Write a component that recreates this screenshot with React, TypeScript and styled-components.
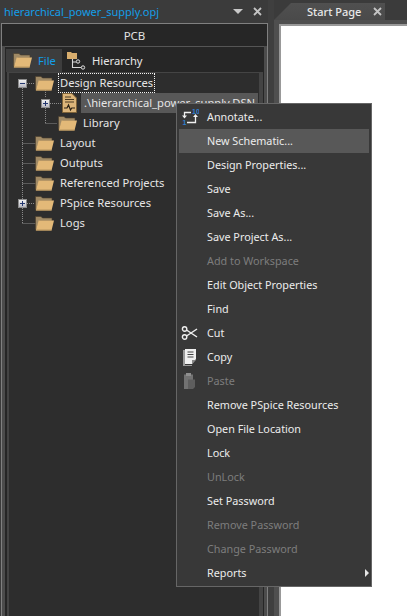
import React from "react";
import styled, { createGlobalStyle } from "styled-components";

const Global = createGlobalStyle`
  html, body { margin: 0; padding: 0; background: #3b3b3b; }
  #root { width: 407px; height: 616px; overflow: hidden; }
  * { box-sizing: border-box; }
`;

const Page = styled.div`
  position: relative;
  width: 407px;
  height: 616px;
  display: flex;
  background: #3b3b3b;
  font-family: "Noto Sans", "Open Sans", sans-serif;
  font-size: 11.2px;
  color: #e6e6e6;
  overflow: hidden;
`;

const LeftDock = styled.div`
  width: 268px;
  flex: none;
  display: flex;
  flex-direction: column;
`;

const DockTitle = styled.div`
  height: 23px;
  flex: none;
  display: flex;
  align-items: center;
  padding-left: 4px;
  color: #149ee8;
  font-size: 11px;
`;

const DockTitleText = styled.span`
  flex: 1;
`;

const DockArrow = styled.span`
  width: 0;
  height: 0;
  border-left: 5px solid transparent;
  border-right: 5px solid transparent;
  border-top: 5px solid #c8c8c8;
  margin-right: 10px;
`;

const CloseGlyph = styled.svg`
  width: 9px;
  height: 9px;
  flex: none;
  display: block;
`;

const DockCloseSlot = styled.span`
  display: flex;
  margin-right: 6px;
`;

const DockBody = styled.div`
  flex: 1;
  margin-left: 1px;
  border: 1px solid #808080;
  border-bottom: none;
  display: flex;
  flex-direction: column;
  background: #4c4c4c;
`;

const PanelHeader = styled.div`
  height: 22px;
  flex: none;
  background: #262626;
  display: flex;
  align-items: center;
  justify-content: center;
  font-size: 11.5px;
  color: #e2e2e2;
`;

const PanelInset = styled.div`
  flex: 1;
  display: flex;
  flex-direction: column;
  padding: 0 3px;
`;

const PanelFrame = styled.div`
  flex: 1;
  border-top: 1px solid #555;
  padding: 0 1px;
  display: flex;
  flex-direction: column;
  background: #262626;
`;

const TabStrip = styled.div`
  height: 23px;
  flex: none;
  margin-top: 2px;
  display: flex;
`;

const SideTab = styled.div<{ $active?: boolean }>`
  width: ${(p) => (p.$active ? "56px" : "86px")};
  display: flex;
  align-items: center;
  gap: ${(p) => (p.$active ? "6px" : "5px")};
  padding-left: ${(p) => (p.$active ? "7px" : "5px")};
  background: ${(p) => (p.$active ? "#3d3d3d" : "transparent")};
  color: ${(p) => (p.$active ? "#139ee8" : "#e6e6e6")};
`;

const TreePane = styled.div`
  position: relative;
  flex: 1;
  margin-left: 1px;
  background: #2d2d2d;
  border-top: 1px solid #444;
  border-left: 2px solid #444;
  border-right: 4px solid #444;
`;

const TreeLines = styled.svg`
  position: absolute;
  left: 0;
  top: 0;
  width: 80px;
  height: 160px;
  pointer-events: none;
`;

const Row = styled.div<{ $indent: number }>`
  position: relative;
  height: 20px;
  display: flex;
  align-items: center;
  padding-left: ${(p) => p.$indent}px;
  white-space: nowrap;
`;

const Expander = styled.span<{ $left: number }>`
  position: absolute;
  top: 6px;
  left: ${(p) => p.$left}px;
  width: 9px;
  height: 9px;
  background: linear-gradient(#f2f2f2, #b9b9c2);
  border: 1px solid #8c8c8c;
  display: block;
`;

const ExpanderGlyph = styled.svg`
  display: block;
  width: 7px;
  height: 7px;
`;

const RowLabel = styled.span<{ $selected?: boolean; $focus?: boolean }>`
  margin-left: 4px;
  height: 20px;
  line-height: 19px;
  padding: 0 ${(p) => (p.$selected ? "0 0 3px" : "2px")};
  color: #e6e6e6;
  background: ${(p) => (p.$selected ? "#585858" : "transparent")};
  outline: ${(p) => (p.$focus ? "1px dotted #f2f2f2" : "none")};
  outline-offset: -1px;
  ${(p) => (p.$selected ? "width: 177px; overflow: hidden;" : "")}
`;

const Splitter = styled.div`
  width: 6px;
  flex: none;
  background: #3f3f3f;
`;

const RightDock = styled.div`
  flex: 1;
  display: flex;
  flex-direction: column;
`;

const TabBar = styled.div`
  height: 20px;
  flex: none;
  display: flex;
  align-items: flex-end;
`;

const DocTab = styled.div`
  width: 111px;
  height: 17px;
  display: flex;
  align-items: center;
  padding-left: 33px;
  gap: 12px;
  background: linear-gradient(#505050, #4a4a4a);
  clip-path: polygon(0 100%, 17px 0, 100% 0, 100% 100%);
  color: #e8e8e8;
  font-size: 11px;
  font-weight: 500;
`;

const DocumentWell = styled.div`
  flex: 1;
  display: flex;
  padding: 4px 0 0 5px;
  background: #4f4f4f;
`;

const DocumentSheet = styled.div`
  flex: 1;
  background: #fff;
  border-top: 2px solid #999;
  border-left: 2px solid #999;
`;

const Menu = styled.div`
  position: absolute;
  left: 176px;
  top: 103px;
  width: 196px;
  height: 484px;
  background: #383838;
  border: 1px solid #666;
  padding: 1px 2px 0 2px;
  display: flex;
  flex-direction: column;
  font-size: 10.8px;
`;

const MenuItem = styled.div<{ $disabled?: boolean; $hot?: boolean }>`
  position: relative;
  height: 24px;
  flex: none;
  display: flex;
  align-items: center;
  padding: 0 0 2px 28px;
  color: ${(p) => (p.$disabled ? "#7d7d7d" : "#ececec")};
  background: ${(p) => (p.$hot ? "#585858" : "transparent")};
`;

const MenuIcon = styled.svg`
  position: absolute;
  left: 2px;
  top: 3px;
  width: 18px;
  height: 18px;
`;

const Submenu = styled.span`
  position: absolute;
  right: 0;
  top: 8px;
  width: 0;
  height: 0;
  border-top: 4px solid transparent;
  border-bottom: 4px solid transparent;
  border-left: 4px solid #e6e6e6;
`;

const Folder = () => (
  <svg width="19" height="15" viewBox="0 0 19 15" style={{ flex: "none", display: "block" }}>
    <path d="M.5 .5h5.5l1.5 1.5H17V5H4.5L1.5 13.5H.5z" fill="#a08a66" stroke="#4a3e2c" strokeWidth=".6" />
    <path d="M3.6 4.5H19L16.5 14.6H.8z" fill="#e3b978" />
    <path d="M.9 14.6H16.5l.25-1H1.2z" fill="#b8955f" />
  </svg>
);

const Close = ({ color }: { color: string }) => (
  <CloseGlyph viewBox="0 0 9 9">
    <path d="M1 1l7 7M8 1L1 8" stroke={color} strokeWidth="1.8" />
  </CloseGlyph>
);

const Expand = ({ open }: { open: boolean }) => (
  <ExpanderGlyph viewBox="0 0 7 7">
    <path d={open ? "M1 3.5h5" : "M1 3.5h5M3.5 1v5"} stroke="#23376f" strokeWidth="1" />
  </ExpanderGlyph>
);

const HierarchyIcon = () => (
  <svg width="20" height="20" viewBox="0 0 20 20" style={{ flex: "none" }}>
    <path d="M0 1h4l1 1h5v6H0z" fill="#d8ad6d" />
    <path d="M5.5 8v8.5h9M5.5 11h4" stroke="#d8d8d8" strokeWidth="1.1" fill="none" />
    <circle cx="11" cy="10.5" r="1.7" fill="#2b2b2b" stroke="#e0e0e0" />
    <circle cx="16" cy="16.5" r="1.7" fill="#2b2b2b" stroke="#e0e0e0" />
  </svg>
);

const SchematicIcon = () => (
  <svg width="15" height="20" viewBox="0 0 15 20" style={{ flex: "none", display: "block" }}>
    <path d="M.5 .5h9.5l4.5 4.5v14.5H.5z" fill="#dcb57a" stroke="#7d6238" />
    <path d="M3 4h6M3 6.5h9M3 9h9" stroke="#4a3a22" strokeWidth="1" />
    <path d="M2 15h3l1.5-3 2 5 1.2-2H13" stroke="#2a2114" strokeWidth="1.2" fill="none" />
  </svg>
);

const AnnotateIcon = () => (
  <MenuIcon viewBox="0 0 18 18">
    <path d="M3.5 8V4.5H10M6 14.5h8.5V8" stroke="#f0f0f0" strokeWidth="1.3" fill="none" />
    <path d="M1 7.5h5L3.5 10.5zM12 9h5l-2.5-3z" fill="#f0f0f0" />
    <text x="11" y="6" fontSize="7" fontWeight="700" fill="#2f7fd0" fontFamily="Liberation Sans, sans-serif">10</text>
    <text x="1.5" y="17" fontSize="7" fontWeight="700" fill="#2f7fd0" fontFamily="Liberation Sans, sans-serif">1</text>
  </MenuIcon>
);

const CutIcon = () => (
  <MenuIcon viewBox="0 0 18 18">
    <circle cx="3.6" cy="5" r="2.2" fill="none" stroke="#eee" strokeWidth="1.4" />
    <circle cx="3.6" cy="13" r="2.2" fill="none" stroke="#eee" strokeWidth="1.4" />
    <path d="M5.5 6L16 13M5.5 12L16 5" stroke="#eee" strokeWidth="1.5" />
  </MenuIcon>
);

const CopyIcon = () => (
  <MenuIcon viewBox="0 0 18 18">
    <path d="M4 1h11v10l-4 5H4z" fill="#f0f0f0" />
    <path d="M2 2h2v15h7v1H2z" fill="#9a9a9a" />
    <path d="M6.5 4h6M6.5 6.5h6M6.5 9h6" stroke="#444" strokeWidth="1" />
    <path d="M11 16v-4h4z" fill="#888" />
  </MenuIcon>
);

const PasteIcon = () => (
  <MenuIcon viewBox="0 0 18 18">
    <path d="M3 2.5h9V17H3z" fill="#727272" />
    <path d="M5 1h5v3H5z" fill="#8e8e8e" />
    <path d="M7 7.5h7V15l-2 2H7z" fill="#5e5e5e" />
  </MenuIcon>
);

const items: { label: string; disabled?: boolean; hot?: boolean; icon?: React.ReactNode; sub?: boolean }[] = [
  { label: "Annotate...", icon: <AnnotateIcon /> },
  { label: "New Schematic...", hot: true },
  { label: "Design Properties..." },
  { label: "Save" },
  { label: "Save As..." },
  { label: "Save Project As..." },
  { label: "Add to Workspace", disabled: true },
  { label: "Edit Object Properties" },
  { label: "Find" },
  { label: "Cut", icon: <CutIcon /> },
  { label: "Copy", icon: <CopyIcon /> },
  { label: "Paste", disabled: true, icon: <PasteIcon /> },
  { label: "Remove PSpice Resources" },
  { label: "Open File Location" },
  { label: "Lock" },
  { label: "UnLock", disabled: true },
  { label: "Set Password" },
  { label: "Remove Password", disabled: true },
  { label: "Change Password", disabled: true },
  { label: "Reports", sub: true },
];

export default function App() {
  return (
    <Page>
      <Global />
      <LeftDock>
        <DockTitle>
          <DockTitleText>hierarchical_power_supply.opj</DockTitleText>
          <DockArrow />
          <DockCloseSlot>
            <Close color="#c4c4c4" />
          </DockCloseSlot>
        </DockTitle>
        <DockBody>
          <PanelHeader>PCB</PanelHeader>
          <PanelInset>
            <PanelFrame>
              <TabStrip>
                <SideTab $active>
                  <Folder />
                  File
                </SideTab>
                <SideTab>
                  <HierarchyIcon />
                  Hierarchy
                </SideTab>
              </TabStrip>
              <TreePane>
                <TreeLines viewBox="0 0 80 160">
                  <g stroke="#8a8a8a" strokeWidth="1" strokeDasharray="1 1" fill="none">
                    <path d="M13.5 15V150.5M18 10.5h8M36.5 15v10M36.5 35v15.5M41 30.5h11M36.5 50.5h12M13.5 70.5h13M13.5 90.5h13M13.5 110.5h13M18 130.5h8M13.5 150.5h13" />
                  </g>
                </TreeLines>
                <Row $indent={26}>
                  <Expander $left={9}>
                    <Expand open />
                  </Expander>
                  <Folder />
                  <RowLabel $focus>Design Resources</RowLabel>
                </Row>
                <Row $indent={53}>
                  <Expander $left={32}>
                    <Expand open={false} />
                  </Expander>
                  <SchematicIcon />
                  <RowLabel $selected>.\hierarchical_power_supply.DSN</RowLabel>
                </Row>
                <Row $indent={49}>
                  <Folder />
                  <RowLabel>Library</RowLabel>
                </Row>
                <Row $indent={26}>
                  <Folder />
                  <RowLabel>Layout</RowLabel>
                </Row>
                <Row $indent={26}>
                  <Folder />
                  <RowLabel>Outputs</RowLabel>
                </Row>
                <Row $indent={26}>
                  <Folder />
                  <RowLabel>Referenced Projects</RowLabel>
                </Row>
                <Row $indent={26}>
                  <Expander $left={9}>
                    <Expand open={false} />
                  </Expander>
                  <Folder />
                  <RowLabel>PSpice Resources</RowLabel>
                </Row>
                <Row $indent={26}>
                  <Folder />
                  <RowLabel>Logs</RowLabel>
                </Row>
              </TreePane>
            </PanelFrame>
          </PanelInset>
        </DockBody>
      </LeftDock>
      <Splitter />
      <RightDock>
        <TabBar>
          <DocTab>
            Start Page
            <Close color="#c4c4c4" />
          </DocTab>
        </TabBar>
        <DocumentWell>
          <DocumentSheet />
        </DocumentWell>
      </RightDock>
      <Menu>
        {items.map((it) => (
          <MenuItem key={it.label} $disabled={it.disabled} $hot={it.hot}>
            {it.icon}
            {it.label}
            {it.sub && <Submenu />}
          </MenuItem>
        ))}
      </Menu>
    </Page>
  );
}
